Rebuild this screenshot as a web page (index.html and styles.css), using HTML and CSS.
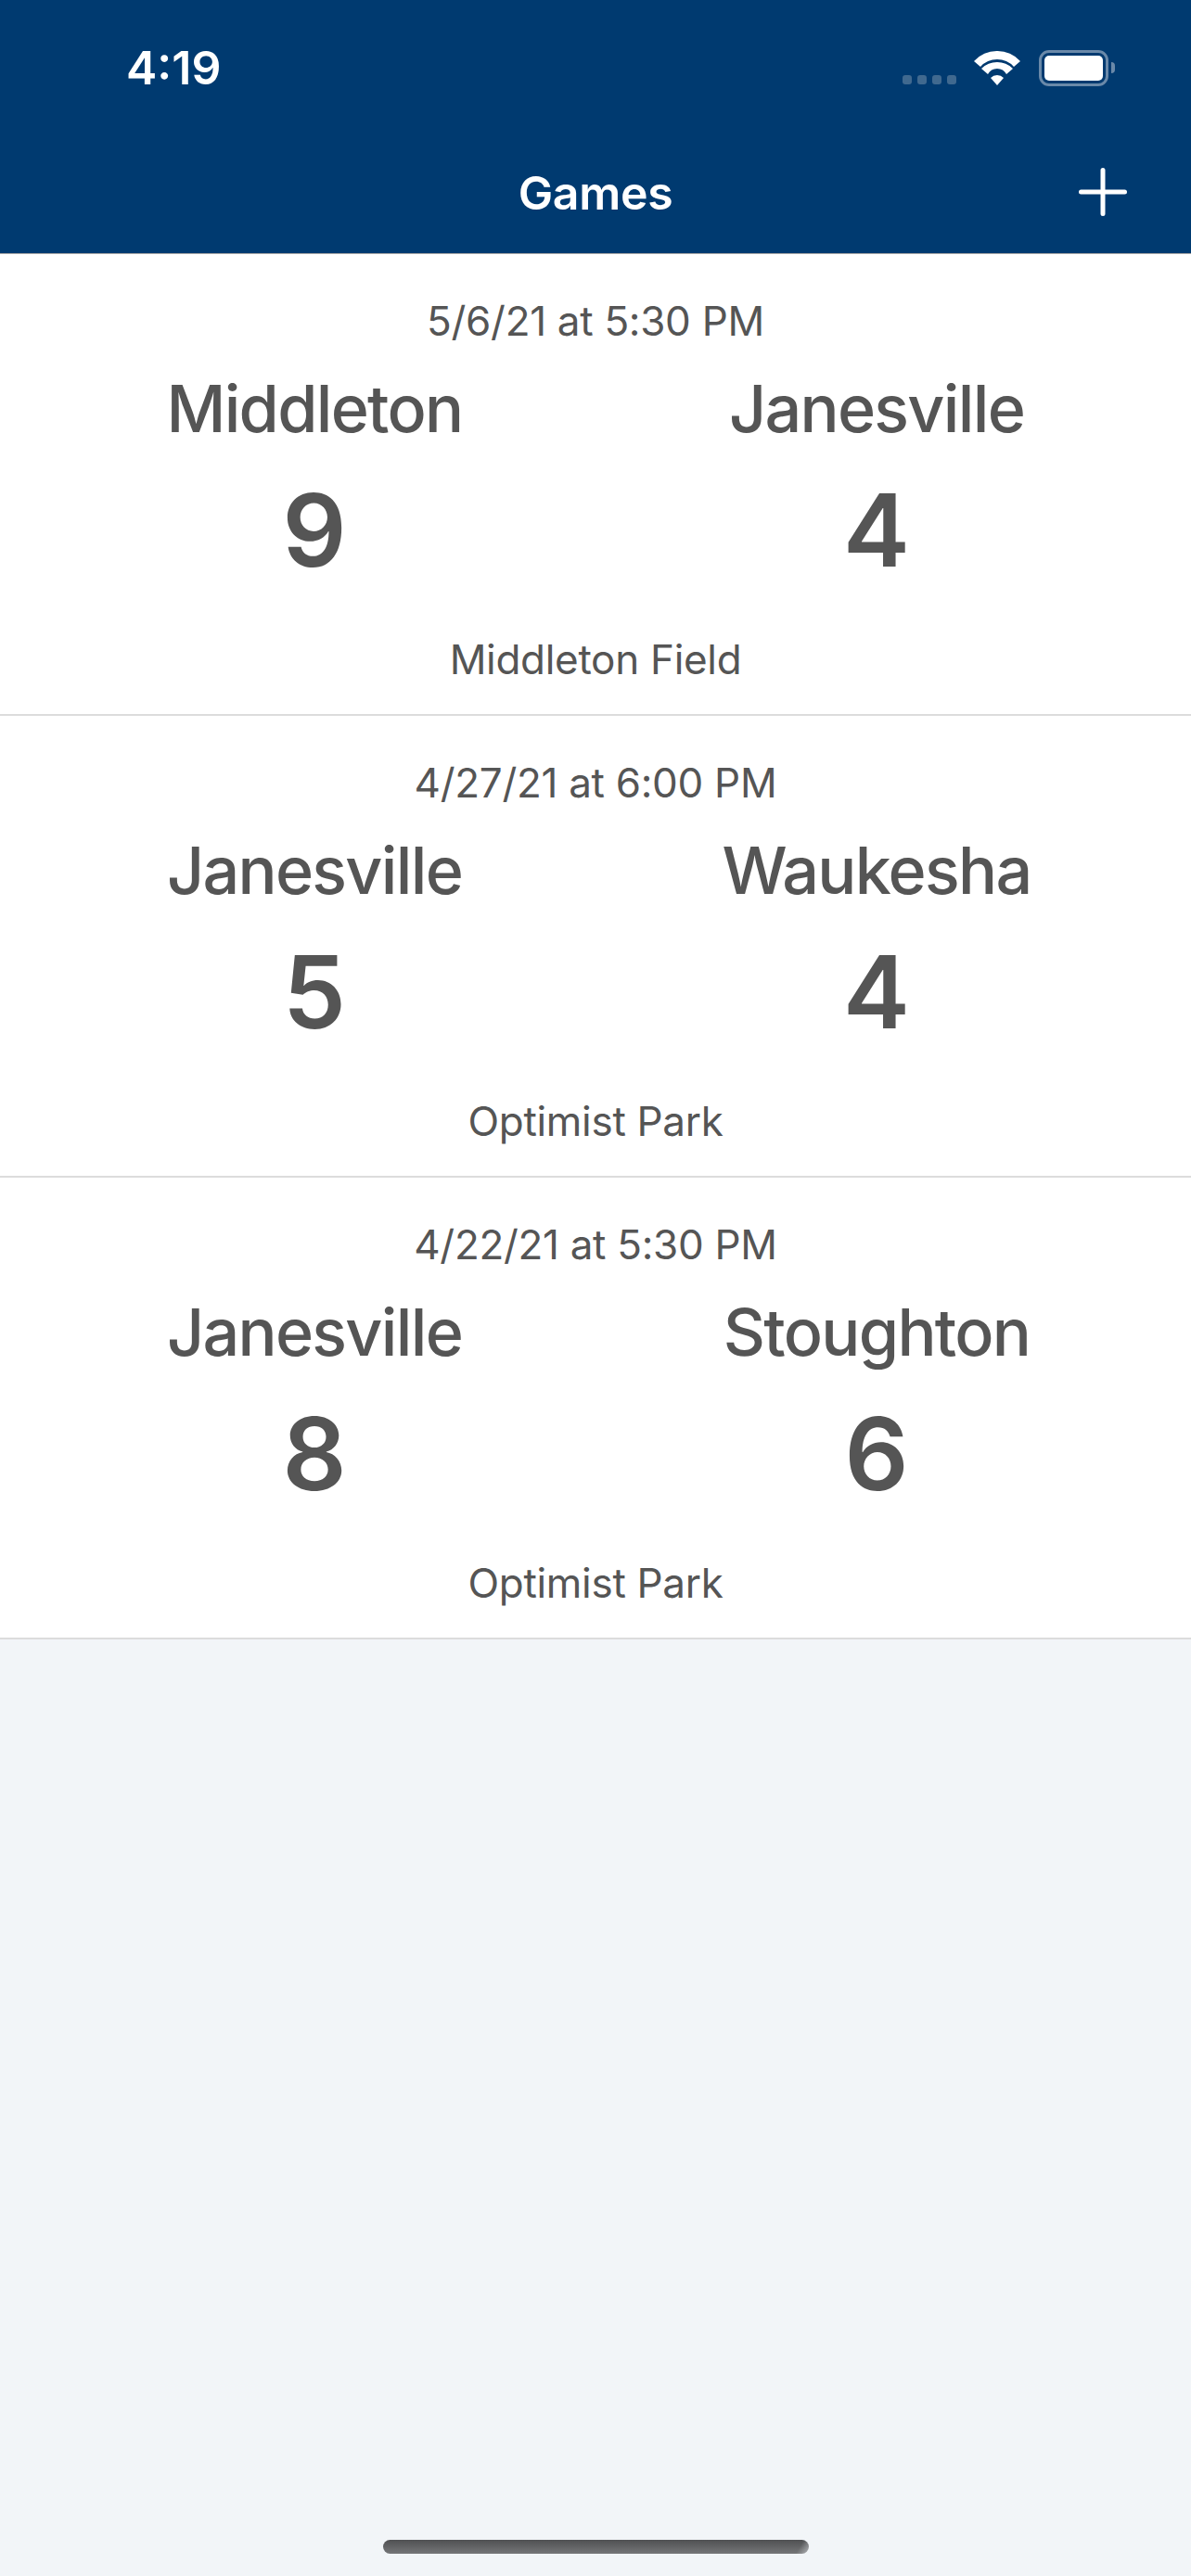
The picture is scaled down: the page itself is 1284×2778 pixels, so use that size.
FILE: index.html
```html
<!DOCTYPE html>
<html lang="en">
<head>
  <meta charset="UTF-8">
  <meta name="viewport" content="width=device-width, initial-scale=1.0">
  <title>Games</title>
  <link rel="stylesheet" href="styles.css">
</head>
<body>

<header class="top">
  <div class="status-bar">
    <span class="time">4:19</span>
    <div class="status-icons">
      <div class="signal"><i></i><i></i><i></i><i></i></div>
      <svg class="wifi" width="50" height="37" viewBox="0 0 50 37">
        <path d="M0 11 A33.900 33.900 0 0 1 50 11 L43 17 A24.250 24.250 0 0 0 7 17 Z" fill="#fff"/>
        <path d="M8 19 A24 24 0 0 1 42 19 L35 25 A11.300 11.300 0 0 0 15 25 Z" fill="#fff"/>
        <path d="M18 29 A9.700 9.700 0 0 1 32 29 L25 37 Z" fill="#fff"/>
      </svg>
      <div class="battery"><div class="battery-level"></div></div>
      <div class="battery-nub"></div>
    </div>
  </div>
  <div class="nav-bar">
    <h1>Games</h1>
    <svg class="add" width="54" height="54" viewBox="0 0 54 54">
      <path d="M27 3.500 V50.500 M3.500 27 H50.500" stroke="#fff" stroke-width="5" stroke-linecap="round" fill="none"/>
    </svg>
  </div>
</header>

<main class="games">
  <section class="game">
    <p class="date">5/6/21 at 5:30 PM</p>
    <div class="teams">
      <div class="team"><span class="name">Middleton</span><span class="score">9</span></div>
      <div class="team"><span class="name">Janesville</span><span class="score">4</span></div>
    </div>
    <p class="venue">Middleton Field</p>
  </section>
  <section class="game">
    <p class="date">4/27/21 at 6:00 PM</p>
    <div class="teams">
      <div class="team"><span class="name">Janesville</span><span class="score">5</span></div>
      <div class="team"><span class="name">Waukesha</span><span class="score">4</span></div>
    </div>
    <p class="venue">Optimist Park</p>
  </section>
  <section class="game">
    <p class="date">4/22/21 at 5:30 PM</p>
    <div class="teams">
      <div class="team"><span class="name">Janesville</span><span class="score">8</span></div>
      <div class="team"><span class="name">Stoughton</span><span class="score">6</span></div>
    </div>
    <p class="venue">Optimist Park</p>
  </section>
</main>

<div class="home-indicator"></div>

</body>
</html>
```

FILE: styles.css
```css
* {
  box-sizing: border-box;
}

body {
  background-color: #f2f5f8;
  color: #555555;
  font-family: 'Inter', 'Liberation Sans', sans-serif;
  display: flex;
  flex-direction: column;
  height: 2778px;
  margin: 0;
  overflow: hidden;
}

.top {
  background-color: #003a70;
  color: #ffffff;
  height: 274px;
  border-bottom: 1px solid #a6a6a6;
}

.status-bar {
  display: flex;
  justify-content: space-between;
  align-items: center;
  height: 146px;
  padding: 0 82px 0 136px;
}

.time {
  font-size: 50px;
  font-weight: 600;
}

.status-icons {
  display: flex;
  align-items: center;
}

.signal {
  display: flex;
  gap: 6px;
  margin: 26px 19px 0 0;
}

.signal i {
  width: 10px;
  height: 10px;
  border-radius: 3px;
  background-color: #40698f;
}

.wifi {
  margin-right: 20px;
}

.battery {
  width: 75px;
  height: 39px;
  padding: 3px;
  border: 3px solid #6a89a9;
  border-radius: 11px;
}

.battery-level {
  height: 100%;
  background-color: #ffffff;
  border-radius: 5px;
}

.battery-nub {
  width: 4px;
  height: 12px;
  margin-left: 3px;
  background-color: #6a89a9;
  border-radius: 0 4px 4px 0;
}

.nav-bar {
  display: flex;
  justify-content: center;
  align-items: center;
  position: relative;
  height: 123px;
}

.nav-bar h1 {
  margin: 0;
  font-size: 50px;
  font-weight: 600;
  letter-spacing: -0.3px;
}

.add {
  position: absolute;
  right: 68px;
  top: 34px;
}

.game {
  display: flex;
  flex-direction: column;
  align-items: center;
  height: 498px;
  padding: 45px 36px 0;
  background-color: #ffffff;
  border-bottom: 2px solid #dcdcdc;
}

.date,
.venue {
  margin: 0;
  font-size: 44px;
  line-height: 54px;
  letter-spacing: -0.3px;
}

.teams {
  display: grid;
  grid-template-columns: 1fr 1fr;
  width: 100%;
}

.team {
  display: flex;
  flex-direction: column;
  align-items: center;
}

.name {
  margin-top: 26px;
  font-size: 70px;
  font-weight: 500;
  line-height: 84px;
  letter-spacing: -1.7px;
}

.score {
  margin-top: 24px;
  font-size: 108px;
  font-weight: 600;
  line-height: 130px;
}

.venue {
  margin-top: 47px;
}

.home-indicator {
  width: 459px;
  height: 15px;
  margin: auto auto 24px;
  border-radius: 8px;
  background: linear-gradient(120deg, transparent 97%, rgba(242, 245, 248, 0.5)), linear-gradient(#4f5052, #757678);
}
```
